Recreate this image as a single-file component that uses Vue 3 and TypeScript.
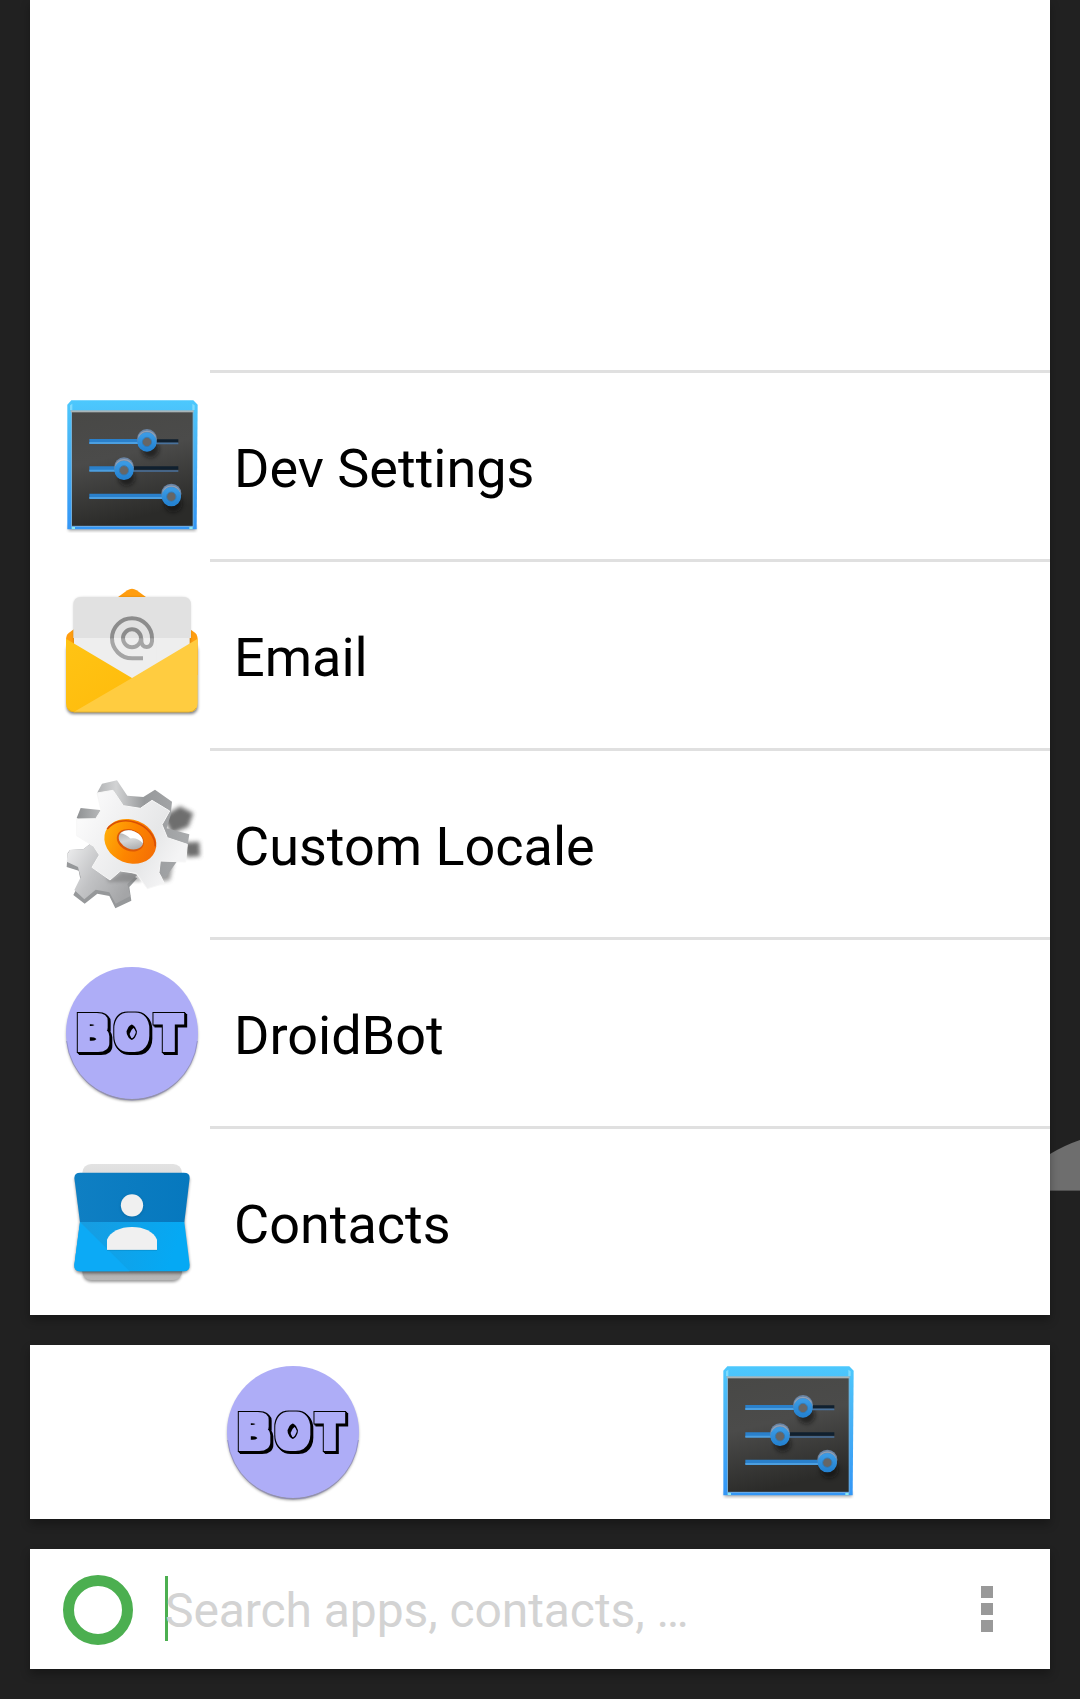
<script setup lang="ts">
interface AppEntry {
  name: string
  icon: string
}

const apps: AppEntry[] = [
  { name: 'Dev Settings', icon: 'settings' },
  { name: 'Email', icon: 'email' },
  { name: 'Custom Locale', icon: 'locale' },
  { name: 'DroidBot', icon: 'bot' },
  { name: 'Contacts', icon: 'contacts' },
]

const dock: string[] = ['bot', 'settings']
</script>

<template>
  <main class="screen">
    <svg class="defs" aria-hidden="true">
      <defs>
        <linearGradient id="frame" x1="0" y1="0" x2="0" y2="1">
          <stop offset="0" stop-color="#4cc8fd" />
          <stop offset=".35" stop-color="#49b4f5" />
          <stop offset="1" stop-color="#3396f6" />
        </linearGradient>
        <linearGradient id="plate" x1="0" y1="0" x2=".25" y2="1">
          <stop offset="0" stop-color="#484846" />
          <stop offset=".45" stop-color="#4b4b4a" />
          <stop offset="1" stop-color="#2b2b29" />
        </linearGradient>
        <linearGradient id="knob" x1="0" y1="0" x2="0" y2="1">
          <stop offset="0" stop-color="#3a9ae4" />
          <stop offset="1" stop-color="#2583d2" />
        </linearGradient>
        <linearGradient id="flapL" x1="0" y1="0" x2="1" y2="1">
          <stop offset="0" stop-color="#ffc414" />
          <stop offset="1" stop-color="#ffb90a" />
        </linearGradient>
        <linearGradient id="teeth" x1="0" y1="0" x2="1" y2="0">
          <stop offset="0" stop-color="#8f9193" />
          <stop offset=".35" stop-color="#d2d3d4" />
          <stop offset=".6" stop-color="#97999b" />
          <stop offset="1" stop-color="#a9abad" />
        </linearGradient>
        <linearGradient id="gear" x1="0" y1="0" x2="1" y2=".5">
          <stop offset="0" stop-color="#ffffff" />
          <stop offset=".35" stop-color="#f3f3f4" />
          <stop offset=".75" stop-color="#e6e7e8" />
          <stop offset="1" stop-color="#f4f4f5" />
        </linearGradient>
        <linearGradient id="gearBack" x1="0" y1="0" x2="1" y2=".5">
          <stop offset="0" stop-color="#f0f0f1" />
          <stop offset=".5" stop-color="#c2c3c5" />
          <stop offset="1" stop-color="#a4a5a7" />
        </linearGradient>
        <linearGradient id="orange" x1="0" y1="0" x2="1" y2="0">
          <stop offset="0" stop-color="#ffab08" />
          <stop offset=".5" stop-color="#fd8500" />
          <stop offset="1" stop-color="#f46f05" />
        </linearGradient>
        <linearGradient id="hole" x1="0" y1="0" x2="1" y2="1">
          <stop offset="0" stop-color="#a0a1a2" />
          <stop offset=".5" stop-color="#d5d6d7" />
          <stop offset="1" stop-color="#9b9c9e" />
        </linearGradient>
        <linearGradient id="cardTop" x1="0" y1="0" x2="1" y2="0">
          <stop offset="0" stop-color="#0f7fc3" />
          <stop offset="1" stop-color="#0678be" />
        </linearGradient>
        <linearGradient id="cardFold" x1="90" y1="230" x2="370" y2="330" gradientUnits="userSpaceOnUse">
          <stop offset="0" stop-color="#189ce0" />
          <stop offset="1" stop-color="#05a9f4" />
        </linearGradient>
        <linearGradient id="stack" x1="0" y1="0" x2="0" y2="1">
          <stop offset="0" stop-color="#e3e3e3" />
          <stop offset=".9" stop-color="#a9a9a9" />
          <stop offset="1" stop-color="#b8b8b8" />
        </linearGradient>
        <filter id="blur4" x="-30%" y="-30%" width="160%" height="160%"><feGaussianBlur stdDeviation="4" /></filter>
        <filter id="blur7" x="-50%" y="-50%" width="200%" height="200%"><feGaussianBlur stdDeviation="7" /></filter>
        <!-- Block lettering: a square-cornered face with a thin outline and a hard drop edge -->
        <filter id="block" x="-20%" y="-20%" width="140%" height="140%" color-interpolation-filters="sRGB">
          <feMorphology in="SourceAlpha" operator="dilate" radius="12" result="outer" />
          <feOffset in="outer" dx="3" dy="3" result="edge1" />
          <feOffset in="outer" dx="6" dy="6" result="edge2" />
          <feMorphology in="SourceAlpha" operator="dilate" radius="9" result="inner" />
          <feFlood flood-color="#aeadf7" />
          <feComposite in2="inner" operator="in" result="face" />
          <feMerge>
            <feMergeNode in="edge2" />
            <feMergeNode in="edge1" />
            <feMergeNode in="outer" />
            <feMergeNode in="face" />
          </feMerge>
        </filter>
      </defs>

      <symbol id="settings" viewBox="30 27 432 432">
        <rect x="55" y="420" width="383" height="18" fill="#000" opacity=".3" filter="url(#blur4)" />
        <path d="M52 433V59L64 46H430L443 59L440 433Z" fill="url(#frame)" />
        <path d="M60 75V61L67 56V76M427 76V56L434 61V75" fill="#8be0fc" opacity=".8" />
        <path d="M65 78V427M429 78V427" stroke="#7eafd0" stroke-width="3" />
        <rect x="66" y="81" width="362" height="342" fill="url(#plate)" />
        <rect x="62" y="76" width="369" height="6" fill="#a9b4b7" />
        <path d="M65 424H429" stroke="#75aee0" stroke-width="3" />
        <path d="M65 429h10M418 429h10" stroke="#8ceaf0" stroke-width="6" />
        <g filter="url(#blur7)" fill="#111" opacity=".6">
          <circle cx="301" cy="192" r="26" /><circle cx="230" cy="278" r="25" /><circle cx="370" cy="355" r="27" />
        </g>
        <path d="M300 168H385M230 249H385" stroke="#10202f" stroke-width="10" />
        <path d="M300 175H385M230 258H385" stroke="#49729d" stroke-width="5" />
        <path d="M118 169H285M118 251H220M118 333H350" stroke="#2a80cb" stroke-width="14" />
        <path d="M118 174H285M118 257H220M118 339H350" stroke="#4c9fe0" stroke-width="6" />
        <g v-for="k in [[291, 170], [222, 255], [364, 334]]" :key="k[0]">
          <circle :cx="k[0]" :cy="k[1] - 8" r="30" fill="#6a84a4" />
          <path :d="`M${k[0] - 25} ${k[1] - 12}a26 26 0 0 1 50 0`" stroke="#91a0b4" stroke-width="4" fill="none" />
          <circle :cx="k[0]" :cy="k[1] + 1" r="21" fill="#666" stroke="url(#knob)" stroke-width="16" />
          <circle :cx="k[0]" :cy="k[1] + 1" r="14" fill="none" stroke="#376fa0" stroke-width="2" />
        </g>
      </symbol>

      <symbol id="email" viewBox="30 24 432 432">
        <rect x="50" y="205" width="393" height="212" rx="20" fill="#000" opacity=".5" filter="url(#blur4)" />
        <path d="M56 174L232 46Q246 36 260 46L436 174Q443 180 443 195V300H48V195Q48 180 56 174Z" fill="#ff9d0f" />
        <path d="M72 205V93Q72 68 96 68H398Q420 68 420 93V205" fill="#000" opacity=".25" filter="url(#blur4)" />
        <path d="M70 189V90Q70 66 94 66H400Q423 66 423 90V189Z" fill="#e1e1e1" />
        <path d="M72 189H419V230L246 320L72 230Z" fill="#eeeeee" />
        <g fill="none" stroke="#8c8c8c" stroke-width="12">
          <circle cx="246" cy="190" r="27" />
          <path d="M279 250H246A60 60 0 1 1 306 190V199Q304 216 290 216Q276 216 274 199V190" />
        </g>
        <path d="M170 190H320V262H170Z" fill="#eee" opacity=".25" />
        <path d="M48 191L246 309L360 340L75 412Q48 412 48 384Z" fill="url(#flapL)" />
        <path d="M443 191V384Q443 412 415 412H70L246 309Z" fill="#ffcc40" />
        <path d="M54 400Q60 411 75 411H416Q432 411 438 399" fill="none" stroke="#d9a625" stroke-width="2" />
      </symbol>

      <symbol id="locale" viewBox="30 21 432 432">
        <g fill="#555" filter="url(#blur7)" opacity=".85">
          <path d="M340 155L390 124L430 145L415 185L365 205Z" />
          <path d="M400 233L448 230L450 274L410 276Z" />
          <path d="M330 290L370 288L360 345L330 350Z" opacity=".7" />
        </g>
        <path d="M80 159L92 129L150 135L162 160L141 84L156 56L201 46L232 92L280 96L315 74L366 110L362 150L350 190L418 208L412 245L345 340Z" fill="url(#teeth)" />
        <path d="M53 264L60 255L100 253L124 234L150 268L180 300L262 340L238 366L244 407L196 430L178 393L142 386L104 416L70 390L92 347L86 317L50 306Z" fill="#96989a" />
        <path d="M53 266L60 255L100 253L124 234L150 268L180 300L262 330L232 357L241 393L197 416L178 382L137 374L103 403L73 375L92 337L84 306L50 290Z" fill="url(#gearBack)" />
        <path d="M165 325L182 345L216 322L260 325L275 350L230 350L175 352Z" fill="#666" opacity=".4" filter="url(#blur4)" />
        <path d="M141 84L189 76L220 122L271 130L306 106L359 138L336 179L352 218L412 238L407 291L331 288L327 323L343 355L292 371L259 325L211 318L180 345L126 307L148 270L131 244L80 212L80 162L137 161L153 136Z" fill="url(#gear)" stroke="#f7f7f7" stroke-width="3" stroke-linejoin="round" />
        <g transform="rotate(22 241 229)">
          <ellipse cx="241" cy="229" rx="80" ry="65" fill="url(#orange)" />
          <path d="M163 221A79 63 0 0 1 316 215" fill="none" stroke="#d94f04" stroke-width="5" />
          <ellipse cx="240" cy="226" rx="42" ry="32" fill="#dc5908" />
          <ellipse cx="241" cy="224" rx="38" ry="27" fill="url(#hole)" />
          <path d="M204 218Q216 197 243 197Q270 197 278 220Q254 209 238 221Q220 214 204 218Z" fill="#fff" />
        </g>
      </symbol>

      <symbol id="bot" viewBox="30 18 432 432">
        <circle cx="246" cy="241" r="196" fill="#000" opacity=".5" filter="url(#blur4)" />
        <circle cx="246" cy="234" r="198" fill="#aeadf7" />
        <path d="M50 258A197 197 0 0 0 442 258" fill="none" stroke="#8582bd" stroke-width="2" />
        <g filter="url(#block)">
          <text class="bot-word" transform="scale(.88 1)" x="95.500 223 361" y="281">BOT</text>
        </g>
      </symbol>

      <symbol id="contacts" viewBox="30 15 432 432">
        <rect x="98" y="350" width="296" height="61" rx="25" fill="#000" opacity=".4" filter="url(#blur4)" />
        <rect x="97" y="57" width="299" height="348" rx="26" fill="url(#stack)" />
        <path d="M74 100L90 231L73 365Q76 385 92 385H402Q419 380 419 362L403 231L419 100Z" fill="#000" opacity=".45" filter="url(#blur4)" />
        <path d="M90 232L73 99Q73 83 91 83H401Q420 83 419 99L403 232Z" fill="url(#cardTop)" />
        <path d="M90 231H403L419 360Q420 379 401 379H91Q72 379 73 360Z" fill="url(#cardFold)" />
        <path d="M90 231L239 379H91Q72 379 73 360Z" fill="#0caaf6" />
        <circle cx="246" cy="184" r="34" fill="#003b60" opacity=".25" filter="url(#blur4)" />
        <circle cx="246" cy="181" r="33.500" fill="#f0f0f0" />
        <path d="M171 315V284C181 260 210 246 246 246S311 260 321 284V315Z" fill="#f0f0f0" />
        <path d="M171 316H321" stroke="#078bc7" stroke-width="2" />
      </symbol>
    </svg>

    <svg class="backdrop" viewBox="0 0 30 51" aria-hidden="true">
      <path d="M0 14Q15 5 30 0V51H0Z" fill="#6e6e6e" />
      <path d="M0 50.500H30" stroke="#505050" />
    </svg>

    <section class="card list">
      <div v-for="app in apps" :key="app.name" class="row">
        <svg class="icon"><use :href="`#${app.icon}`" /></svg>
        <span class="name">{{ app.name }}</span>
      </div>
    </section>

    <section class="card dock">
      <svg v-for="icon in dock" :key="icon" class="icon"><use :href="`#${icon}`" /></svg>
    </section>

    <section class="card search">
      <span class="ring"></span>
      <div class="field">
        <span class="caret"></span>
        <span class="hint">Search apps, contacts, …</span>
      </div>
      <span class="menu"><i></i><i></i><i></i></span>
    </section>
  </main>
</template>

<style>
body {
  margin: 0;
  background: #212121;
}
</style>

<style scoped>
.screen {
  position: relative;
  box-sizing: border-box;
  width: 1080px;
  height: 1699px;
  padding: 0 30px;
  display: flex;
  flex-direction: column;
  gap: 30px;
  overflow: hidden;
  background: #212121;
  font-family: Roboto, sans-serif;
}

.defs {
  position: absolute;
  width: 0;
  height: 0;
}

.backdrop {
  position: absolute;
  right: 0;
  top: 1140px;
  width: 30px;
  height: 51px;
}

.card {
  position: relative;
  flex: none;
  box-sizing: border-box;
  background: #fff;
  box-shadow: 0 5px 9px rgba(0, 0, 0, 0.3);
}

.list {
  height: 1315px;
  display: flex;
  flex-direction: column;
  justify-content: flex-end;
}

.row {
  height: 189px;
  box-sizing: border-box;
  padding: 3px 0 0 30px;
  display: flex;
  align-items: center;
  gap: 30px;
  background: linear-gradient(#e0e0e0, #e0e0e0) 180px 0 / 840px 3px no-repeat;
}

.icon {
  flex: none;
  width: 144px;
  height: 144px;
}

.bot-word {
  font-family: "Liberation Sans", sans-serif;
  font-size: 143px;
  font-weight: 700;
}

.name {
  font-size: 54px;
  line-height: 64px;
  color: #000;
  padding-top: 5px;
}

.dock {
  height: 174px;
  padding: 0 190px 0 191px;
  display: flex;
  align-items: center;
  justify-content: space-between;
}

.search {
  height: 120px;
  padding: 0 57px 0 33px;
  display: flex;
  align-items: center;
}

.ring {
  box-sizing: border-box;
  width: 70px;
  height: 70px;
  margin-top: 1px;
  border: 11px solid #4caf50;
  border-radius: 50%;
}

.field {
  position: relative;
  flex: 1;
  margin-left: 32px;
  height: 65px;
  margin-bottom: 1px;
}

.caret {
  position: absolute;
  left: 0;
  top: 0;
  width: 3px;
  height: 65px;
  background: #4caf50;
}

.hint {
  position: relative;
  display: block;
  font-size: 48px;
  line-height: 70px;
  letter-spacing: -0.08px;
  color: #d3d3d3;
  white-space: nowrap;
}

.menu {
  display: flex;
  flex-direction: column;
  gap: 5px;
}

.menu i {
  display: block;
  width: 12px;
  height: 12px;
  background: #999;
}
</style>
